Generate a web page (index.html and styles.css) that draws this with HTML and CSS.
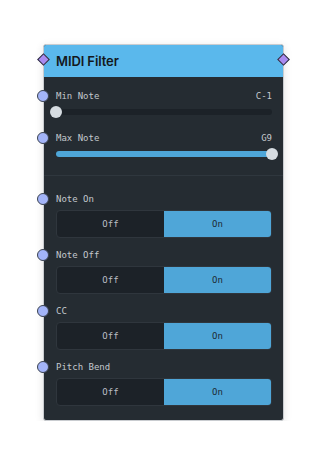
FILE: index.html
```html
<!DOCTYPE html>
<html>
<head>
<meta charset="utf-8">
<link rel="stylesheet" href="styles.css">
</head>
<body>
<div class="node">
  <div class="header">
    <span class="port-diamond left"></span>
    <span class="title">MIDI Filter</span>
    <span class="port-diamond right"></span>
  </div>
  <div class="section sliders">
    <div class="field">
      <div class="label-row"><span class="port"></span><span>Min Note</span><span class="value">C-1</span></div>
      <div class="slider"><div class="fill" style="width:0%"></div><div class="thumb" style="left:0%"></div></div>
    </div>
    <div class="field">
      <div class="label-row"><span class="port"></span><span>Max Note</span><span class="value">G9</span></div>
      <div class="slider"><div class="fill" style="width:100%"></div><div class="thumb" style="left:100%"></div></div>
    </div>
  </div>
  <div class="section toggles">
    <div class="field">
      <div class="label-row"><span class="port"></span><span>Note On</span></div>
      <div class="seg"><div class="opt">Off</div><div class="opt active">On</div></div>
    </div>
    <div class="field">
      <div class="label-row"><span class="port"></span><span>Note Off</span></div>
      <div class="seg"><div class="opt">Off</div><div class="opt active">On</div></div>
    </div>
    <div class="field">
      <div class="label-row"><span class="port"></span><span>CC</span></div>
      <div class="seg"><div class="opt">Off</div><div class="opt active">On</div></div>
    </div>
    <div class="field">
      <div class="label-row"><span class="port"></span><span>Pitch Bend</span></div>
      <div class="seg"><div class="opt">Off</div><div class="opt active">On</div></div>
    </div>
  </div>
</div>
</body>
</html>
```
FILE: styles.css
```css
* { box-sizing: border-box; }
html, body { margin: 0; padding: 0; background: #ffffff; }
body { padding: 44px 0 0 43px; }

.node {
  position: relative;
  width: 241px;
  background: #252c32;
  border: 1px solid #c9ccd0;
  border-radius: 3px;
  box-shadow: 0 2px 8px rgba(0,0,0,0.12);
  font-family: "DejaVu Sans Mono", monospace;
  font-size: 9px;
  color: #c3c8cd;
}

.header {
  position: relative;
  height: 32px;
  background: #5ab8ec;
  border-radius: 2px 2px 0 0;
  display: flex;
  align-items: center;
  padding-left: 12px;
}
.title {
  font-family: Inter, "Noto Sans", sans-serif;
  font-weight: 600;
  font-size: 13px;
  color: #14181c;
  letter-spacing: -0.1px;
}
.port-diamond {
  position: absolute;
  top: 10px;
  width: 9px;
  height: 9px;
  background: #a98af0;
  border: 1px solid #2a2f36;
  transform: rotate(45deg);
}
.port-diamond.left { left: -5px; }
.port-diamond.right { right: -5px; }

.section { padding: 12px 11px 0 12px; }
.sliders {
  padding-bottom: 15px;
  border-bottom: 1px solid #2f373e;
  display: flex;
  flex-direction: column;
  gap: 13px;
}
.toggles {
  padding-top: 16px;
  padding-bottom: 14px;
  display: flex;
  flex-direction: column;
  gap: 10px;
}

.field { display: flex; flex-direction: column; }
.sliders .field { gap: 3px; }
.toggles .field { gap: 4px; }

.label-row {
  position: relative;
  height: 14px;
  display: flex;
  align-items: center;
  justify-content: space-between;
  line-height: 14px;
}
.label-row .value { color: #c3c8cd; }
.port {
  position: absolute;
  left: -19px;
  top: 1px;
  width: 12px;
  height: 12px;
  border-radius: 50%;
  background: #a3b4f8;
  border: 1px solid #3a4250;
}

.slider {
  position: relative;
  height: 12px;
}
.slider::before {
  content: "";
  position: absolute;
  left: 0; right: 0; top: 3px;
  height: 6px;
  border-radius: 3px;
  background: #1c2228;
}
.slider .fill {
  position: absolute;
  left: 0; top: 3px;
  height: 6px;
  border-radius: 3px;
  background: #4ea6d8;
}
.slider .thumb {
  position: absolute;
  top: 0;
  width: 12px;
  height: 12px;
  margin-left: -6px;
  border-radius: 50%;
  background: #d6dce1;
}

.seg {
  height: 28px;
  display: grid;
  grid-template-columns: 1fr 1fr;
  border: 1px solid #2f363d;
  border-radius: 4px;
  overflow: hidden;
  background: #1c2228;
}
.opt {
  display: flex;
  align-items: center;
  justify-content: center;
  color: #b9bec3;
}
.opt.active {
  background: #4fa6d8;
  color: #1d2a34;
}
```
